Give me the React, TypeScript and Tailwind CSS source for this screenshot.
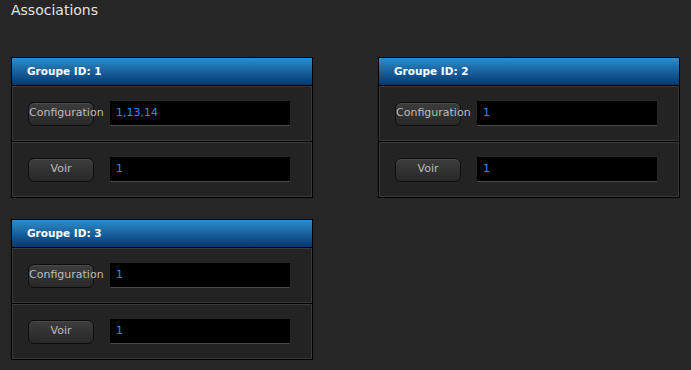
const groups = [
  { id: 1, config: "1,13,14", voir: "1" },
  { id: 2, config: "1", voir: "1" },
  { id: 3, config: "1", voir: "1" },
];

function Row({ label, value }: { label: string; value: string }) {
  return (
    <div className="flex h-[55px] items-center gap-4 border border-[#3a3a3a] bg-[#232323] pl-[15px]">
      <div className="h-6 w-[66px] whitespace-nowrap rounded-md border border-[#0e0e0e] bg-gradient-to-b from-[#3d3d3d] to-[#282828] text-center text-[11px] leading-[19px] text-[#bcbcbc] shadow-[inset_0_1px_0_rgba(255,255,255,0.07)]">
        {label}
      </div>
      <div className="flex h-[25px] w-[180px] items-center border-b border-[#4a4a4a] bg-black pl-1.5 text-[11px] text-[#1f8ff5]">
        {value}
      </div>
    </div>
  );
}

function GroupPanel({ id, config, voir }: { id: number; config: string; voir: string }) {
  return (
    <section className="flex w-[302px] flex-col gap-px border border-black bg-black">
      <div className="flex h-[27px] items-center bg-gradient-to-b from-[#2d8dcc] to-[#053970] pl-[15px] text-[10.5px] font-bold text-white">
        Groupe ID: {id}
      </div>
      <Row label="Configuration" value={config} />
      <Row label="Voir" value={voir} />
    </section>
  );
}

export default function App() {
  return (
    <main
      className="min-h-[370px] bg-[#262626] pl-[11px] pt-[2px]"
      style={{ fontFamily: '"DejaVu Sans", Verdana, sans-serif' }}
    >
      <h1 className="text-[14px] leading-[17px] text-[#e4e4e4]">Associations</h1>
      <div className="mt-[38px] grid grid-cols-[302px_302px] gap-x-[65px] gap-y-[21px] items-start">
        {groups.map((g) => (
          <GroupPanel key={g.id} {...g} />
        ))}
      </div>
    </main>
  );
}
